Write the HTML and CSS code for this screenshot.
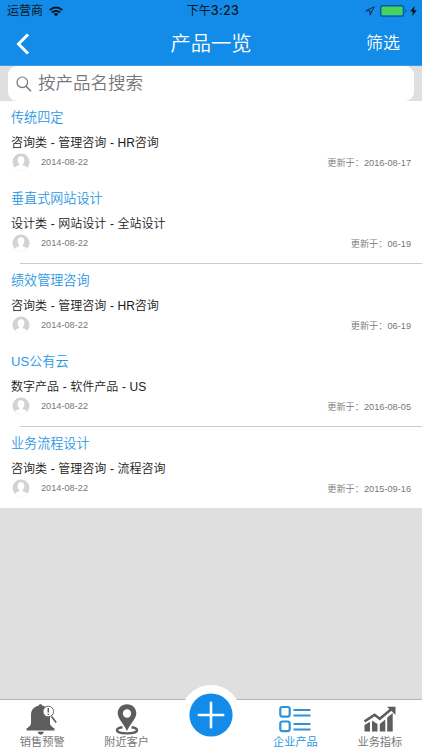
FILE: index.html
```html
<!DOCTYPE html>
<html lang="zh-CN">
<head>
    <meta charset="UTF-8">
    <meta name="viewport" content="width=device-width, initial-scale=1">
    <title>产品一览</title>
    <link rel="stylesheet" href="styles.css">
</head>
<body>
    <svg width="0" height="0" class="defs">
        <symbol id="avatar" viewBox="0 0 18 18">
            <clipPath id="round"><circle cx="9" cy="9" r="8.5"/></clipPath>
            <g clip-path="url(#round)">
                <rect width="18" height="18" fill="#d3d3d5"/>
                <ellipse cx="9" cy="7.3" rx="3.3" ry="4" fill="#fff"/>
                <path d="M7.300 9.500h3.400v2.700c2.200.6 4 1.300 4.300 2.600V18H3v-3.200c.3-1.300 2.100-2 4.300-2.600z" fill="#fff"/>
            </g>
        </symbol>
    </svg>

    <header class="header">
        <div class="status">
            <div class="carrier">
                <span>运营商</span>
                <svg width="14" height="11" viewBox="0 0 14 11">
                    <path d="M.8 4.100a9 9 0 0 1 12.400 0M3 6.500a5.800 5.800 0 0 1 8 0" fill="none" stroke="#0b1620" stroke-width="2"/>
                    <path d="M4.700 8.100a3.300 3.300 0 0 1 4.600 0L7 10.600z" fill="#0b1620"/>
                </svg>
            </div>
            <div class="time">下午<b>3:23</b></div>
            <div class="power">
                <svg width="10" height="10" viewBox="0 0 10 10">
                    <path d="M9.200.8L.8 4.800h4.300v4.300z" fill="none" stroke="#0b2238" stroke-width=".9"/>
                </svg>
                <svg width="27" height="12" viewBox="0 0 27 12">
                    <rect x=".6" y=".6" width="23" height="10.600" rx="2" fill="none" stroke="#0a5592" stroke-width="1.100"/>
                    <rect x="1.700" y="1.700" width="20.800" height="8.400" rx="1" fill="#45d455"/>
                    <path d="M25.200 4v4q1.200-.6 1.200-2t-1.200-2z" fill="#0a5592"/>
                </svg>
                <svg width="7" height="10" viewBox="0 0 7 10">
                    <path d="M4.400 0L.2 5.600h2.700L2.300 10 6.800 4.200H4z" fill="#08121c"/>
                </svg>
            </div>
        </div>
        <div class="nav">
            <svg class="back" width="14" height="22" viewBox="0 0 14 22">
                <path d="M12 1.500L2.500 11l9.500 9.500" fill="none" stroke="#fff" stroke-width="3"/>
            </svg>
            <h1>产品一览</h1>
            <a class="filter">筛选</a>
        </div>
    </header>

    <div class="search">
        <div class="search-box">
            <svg width="16" height="16" viewBox="0 0 16 16">
                <circle cx="6.300" cy="6.300" r="5.300" fill="none" stroke="#77777b" stroke-width="1.200"/>
                <path d="M10 10.200l5 5" stroke="#77777b" stroke-width="1.500"/>
            </svg>
            <span>按产品名搜索</span>
        </div>
    </div>

    <ul class="list">
        <li>
            <h2>传统四定</h2>
            <p>咨询类 - 管理咨询 - HR咨询</p>
            <div class="meta"><svg><use href="#avatar"/></svg><span>2014-08-22</span><span class="update">更新于：2016-08-17</span></div>
        </li>
        <li class="line">
            <h2>垂直式网站设计</h2>
            <p>设计类 - 网站设计 - 全站设计</p>
            <div class="meta"><svg><use href="#avatar"/></svg><span>2014-08-22</span><span class="update">更新于：06-19</span></div>
        </li>
        <li>
            <h2>绩效管理咨询</h2>
            <p>咨询类 - 管理咨询 - HR咨询</p>
            <div class="meta"><svg><use href="#avatar"/></svg><span>2014-08-22</span><span class="update">更新于：06-19</span></div>
        </li>
        <li class="line">
            <h2>US公有云</h2>
            <p>数字产品 - 软件产品 - US</p>
            <div class="meta"><svg><use href="#avatar"/></svg><span>2014-08-22</span><span class="update">更新于：2016-08-05</span></div>
        </li>
        <li>
            <h2>业务流程设计</h2>
            <p>咨询类 - 管理咨询 - 流程咨询</p>
            <div class="meta"><svg><use href="#avatar"/></svg><span>2014-08-22</span><span class="update">更新于：2015-09-16</span></div>
        </li>
    </ul>

    <footer class="tabs">
        <a class="tab">
            <svg width="32" height="32" viewBox="0 0 32 32">
                <path d="M14.500 1.300c1 0 1.800.6 2 1.500 5 1 7.500 4.500 7.500 9.500v8c0 2.500 2.500 4 4.500 5.200v2H.5v-2C2.500 24.300 5 22.800 5 20.300v-8c0-5 2.500-8.500 7.500-9.500.2-.9 1-1.500 2-1.500z" fill="#5d5d5d"/>
                <path d="M11.500 28.700h6.500q-1 3-3.200 3t-3.300-3z" fill="#5d5d5d"/>
                <circle cx="22.300" cy="8.500" r="5.300" fill="#fff" stroke="#666" stroke-width="1"/>
                <path d="M25.500 13.500l4.700 6" stroke="#5d5d5d" stroke-width="1.600"/>
                <path d="M22.300 5v4.500M22.300 10.700v1.300" stroke="#5d5d5d" stroke-width="1.500"/>
            </svg>
            <span>销售预警</span>
        </a>
        <a class="tab">
            <svg width="24" height="32" viewBox="0 0 24 32">
                <path d="M7.500 24.200C4 24.700 2 25.800 2 27.200c0 2 4.500 3.200 10 3.200s10-1.200 10-3.200c0-1.400-2-2.500-5.500-3" fill="none" stroke="#5d5d5d" stroke-width="2.400"/>
                <path d="M12 1.300c5.500 0 9.300 3.900 9.300 9 0 5.500-5.800 10-9.300 17.700-3.500-7.700-9.300-12.200-9.300-17.700 0-5.100 3.800-9 9.300-9zm0 5a4.200 4.200 0 1 0 0 8.400 4.200 4.200 0 0 0 0-8.400z" fill="#5d5d5d" fill-rule="evenodd"/>
            </svg>
            <span>附近客户</span>
        </a>
        <a class="tab add">
            <svg width="60" height="60" viewBox="0 0 60 60">
                <circle cx="30" cy="30" r="30" fill="#fff"/>
                <circle cx="30" cy="30" r="21.600" fill="#128ce8"/>
                <path d="M17.800 30h24.400M30 17.800v24.400" stroke="#fff" stroke-width="2.600" stroke-linecap="round"/>
            </svg>
        </a>
        <a class="tab active">
            <svg width="32" height="32" viewBox="0 0 32 32">
                <g fill="none" stroke="#3192d4" stroke-width="2.200">
                    <rect x="1.300" y="4" width="9.400" height="9.600" rx="2"/>
                    <rect x="1.300" y="18.500" width="9.400" height="9.600" rx="2"/>
                    <path d="M14.500 7h17M14.500 12.500h17M14.500 21h17M14.500 26.500h17" stroke-width="1.900"/>
                </g>
            </svg>
            <span>企业产品</span>
        </a>
        <a class="tab">
            <svg width="32" height="32" viewBox="0 0 32 32">
                <path d="M.5 22l5.500-3.300v9.800H.5zM8 17.500l5.500 3.500v7.500H8zM15.800 21l5.500-4.500v12h-5.500zM23.200 14.500l5.500-4.500v18.500h-5.500z" fill="#5d5d5d"/>
                <path d="M.5 18.500l10-6.700 5.300 4L27.500 6" fill="none" stroke="#5d5d5d" stroke-width="2.600"/>
                <path d="M23 3.800h8.500v8.300z" fill="#5d5d5d"/>
            </svg>
            <span>业务指标</span>
        </a>
    </footer>
</body>
</html>
```
FILE: styles.css
```css
* {
    box-sizing: border-box;
    margin: 0;
    padding: 0;
}
body {
    width: 422px;
    height: 750px;
    display: flex;
    flex-direction: column;
    overflow: hidden;
    background: #dfdfdf;
    font-family: "Liberation Sans", "Noto Sans CJK SC", sans-serif;
    font-weight: 300;
}
svg {
    display: block;
    flex: none;
}
.defs {
    position: absolute;
}
.header {
    height: 66px;
    flex: none;
    background: #128ce8;
    border-bottom: 1px solid #3b9fe9;
}
.status {
    height: 21px;
    padding: 0 5px 0 7px;
    display: grid;
    grid-template-columns: 1fr auto 1fr;
    align-items: center;
    font-size: 12px;
    font-weight: 400;
    line-height: 21px;
    color: #0b1620;
}
.carrier, .power {
    display: flex;
    align-items: center;
    gap: 6px;
}
.power {
    justify-content: flex-end;
    gap: 5px;
}
.power svg:last-child {
    margin-left: -2px;
}
.time {
    margin-left: 2px;
}
.time b {
    font-family: Inter, sans-serif;
    font-size: 12.500px;
    font-weight: 500;
    letter-spacing: .3px;
}
.nav {
    height: 44px;
    padding: 0 22px 0 16px;
    display: grid;
    grid-template-columns: 1fr auto 1fr;
    align-items: center;
    color: #fff;
}
.nav h1 {
    font-size: 20.300px;
    font-weight: 350;
    line-height: 44px;
    padding-top: 1px;
    margin-right: -6px;
}
.filter {
    justify-self: end;
    font-size: 17px;
    font-weight: 350;
    line-height: 42px;
}
.search {
    height: 35px;
    flex: none;
    padding: 0 8px;
}
.search-box {
    height: 35px;
    padding-left: 8px;
    display: flex;
    align-items: center;
    gap: 6px;
    background: #fff;
    border-radius: 9px;
    font-size: 17.500px;
    font-weight: 350;
    line-height: 35px;
    color: #77777b;
}
.list {
    list-style: none;
    background: #fff;
    flex: none;
}
.list li {
    height: 81.400px;
    padding: 7px 11px 0;
}
.list .line {
    background: linear-gradient(#ccc, #ccc) 20px 100% / 100% 1px no-repeat;
}
.list h2 {
    font-size: 13.100px;
    font-weight: 350;
    line-height: 20px;
    color: #2b98e3;
}
.list p {
    margin-top: 6px;
    font-size: 12px;
    font-weight: 350;
    line-height: 19px;
    word-spacing: .3px;
    color: #1a1a1a;
}
.meta {
    height: 18px;
    display: flex;
    align-items: center;
    font-size: 9.200px;
    color: #777;
}
.meta svg {
    width: 18px;
    height: 18px;
    margin: 0 11px 0 1px;
}
.update {
    margin-left: auto;
    font-weight: 350;
}
.tabs {
    height: 51px;
    margin-top: auto;
    flex: none;
    display: flex;
    background: #fff;
    border-top: 1px solid #b5b5b5;
}
.tab {
    flex: 1;
    display: flex;
    flex-direction: column;
    align-items: center;
    padding-top: 3px;
    font-size: 11.200px;
    font-weight: 400;
    line-height: 14px;
    color: #777;
}
.add svg {
    margin-top: -18px;
}
.active {
    color: #2b98e3;
}
```
